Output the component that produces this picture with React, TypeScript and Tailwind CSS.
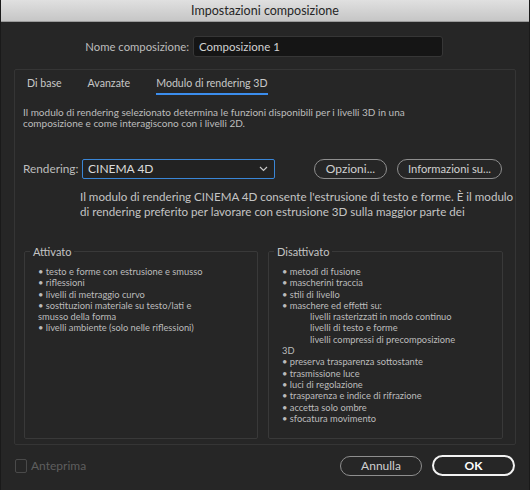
import React from 'react';

const enabledItems = [
  'testo e forme con estrusione e smusso',
  'riflessioni',
  'livelli di metraggio curvo',
];

const disabledTop = [
  'metodi di fusione',
  'mascherini traccia',
  'stili di livello',
  'maschere ed effetti su:',
];

const disabledIndented = [
  'livelli rasterizzati in modo continuo',
  'livelli di testo e forme',
  'livelli compressi di precomposizione',
];

const disabled3D = [
  'preserva trasparenza sottostante',
  'trasmissione luce',
  'luci di regolazione',
  'trasparenza e indice di rifrazione',
  'accetta solo ombre',
  'sfocatura movimento',
];

const Bullet: React.FC<{ children: React.ReactNode }> = ({ children }) => (
  <div className="whitespace-nowrap">• {children}</div>
);

const App: React.FC = () => {
  return (
    <div className="w-[530px] h-[490px] bg-[#262626] flex flex-col border-x border-[#1a1a1a] font-['Lato',sans-serif] text-[#bdbdbd] overflow-hidden">
      {/* Title bar */}
      <div className="h-[22px] shrink-0 bg-gradient-to-b from-[#e0e0e0] to-[#c6c6c6] border-b border-[#9a9a9a] flex items-center justify-center text-[12.5px] leading-[16px] text-[#262626]">
        Impostazioni composizione
      </div>

      {/* Name row */}
      <div className="flex items-center mt-[14px] h-[21px]">
        <div className="w-[188px] text-right text-[11.3px] leading-[16px] text-[#bdbdbd]">Nome composizione:</div>
        <div className="ml-[4px] w-[250px] h-[21px] bg-[#151515] border border-[#363636] rounded-[3px] flex items-center pl-[5px] text-[11.5px] leading-[16px] text-[#d2d2d2]">
          Composizione 1
        </div>
      </div>

      {/* Tab panel */}
      <div className="mt-[12px] ml-[13px] w-[502px] h-[376px] border border-[#353535] rounded-[2px] flex flex-col">
        <div className="flex items-end h-[25px] pl-[12px] text-[10.6px] leading-[14px] text-[#c8c8c8]">
          <div className="pb-[5px]">Di base</div>
          <div className="ml-[26px] pb-[5px]">Avanzate</div>
          <div className="ml-[26px] pb-[3px] border-b-2 border-[#3b8ded]">Modulo di rendering 3D</div>
        </div>

        <div className="mt-[12px] ml-[8px] text-[10px] leading-[11px] text-[#bdbdbd]">
          Il modulo di rendering selezionato determina le funzioni disponibili per i livelli 3D in una
          <br />
          composizione e come interagiscono con i livelli 2D.
        </div>

        {/* Rendering row */}
        <div className="flex items-center mt-[30px] h-[20px]">
          <div className="ml-[8px] w-[59px] text-[11.8px] leading-[16px] text-[#bdbdbd]">Rendering:</div>
          <div className="w-[193px] h-[20px] border border-[#3a86d6] rounded-[2px] bg-[#222] flex items-center justify-between pl-[5px] pr-[6px] text-[12px] leading-[16px] text-[#dadada]">
            <span>CINEMA 4D</span>
            <svg width="9" height="6" viewBox="0 0 9 6" fill="none" stroke="#c8c8c8" strokeWidth="1.2">
              <path d="M1 1l3.5 3.5L8 1" />
            </svg>
          </div>
          <div className="ml-[39px] w-[73px] h-[20px] rounded-full border border-[#8e8e8e] flex items-center justify-center text-[12px] leading-[16px] text-[#d0d0d0]">
            Opzioni...
          </div>
          <div className="ml-[10px] w-[105px] h-[20px] rounded-full border border-[#8e8e8e] flex items-center justify-center text-[11.2px] leading-[16px] text-[#d0d0d0]">
            Informazioni su...
          </div>
        </div>

        <div className="mt-[10px] ml-[65px] text-[11.6px] leading-[15px] text-[#c4c4c4] whitespace-nowrap">
          Il modulo di rendering CINEMA 4D consente l'estrusione di testo e forme. È il modulo
          <br />
          di rendering preferito per lavorare con estrusione 3D sulla maggior parte dei
        </div>

        {/* Groups */}
        <div className="flex mt-[26px] ml-[9px] gap-[10px]">
          <fieldset className="w-[234px] h-[194px] border border-[#393939] rounded-[2px]">
            <legend className="ml-[5px] px-[3px] text-[11px] leading-[13px] text-[#c4c4c4]">Attivato</legend>
            <div className="mt-[8px] pl-[13px] text-[9.3px] leading-[11.3px] text-[#bcbcbc]">
              {enabledItems.map(t => (
                <Bullet key={t}>{t}</Bullet>
              ))}
              <div className="whitespace-nowrap">
                • sostituzioni materiale su testo/lati e
                <br />
                smusso della forma
              </div>
              <Bullet>livelli ambiente (solo nelle riflessioni)</Bullet>
            </div>
          </fieldset>
          <fieldset className="w-[235px] h-[194px] border border-[#393939] rounded-[2px]">
            <legend className="ml-[5px] px-[3px] text-[11px] leading-[13px] text-[#c4c4c4]">Disattivato</legend>
            <div className="mt-[8px] pl-[13px] text-[9.3px] leading-[11.3px] text-[#bcbcbc]">
              {disabledTop.map(t => (
                <Bullet key={t}>{t}</Bullet>
              ))}
              {disabledIndented.map(t => (
                <div key={t} className="pl-[28px] whitespace-nowrap">{t}</div>
              ))}
              <div>3D</div>
              {disabled3D.map(t => (
                <Bullet key={t}>{t}</Bullet>
              ))}
            </div>
          </fieldset>
        </div>
      </div>

      {/* Footer */}
      <div className="flex items-center mt-[10px] h-[21px]">
        <div className="ml-[14px] w-[12px] h-[14px] border border-[#4a4a4a] rounded-[2px]" />
        <div className="ml-[4px] text-[12px] leading-[16px] text-[#5e5e5e]">Anteprima</div>
        <div className="ml-auto w-[82px] h-[20px] rounded-full border border-[#8e8e8e] flex items-center justify-center text-[12px] leading-[16px] text-[#d0d0d0]">
          Annulla
        </div>
        <div className="ml-[10px] mr-[14px] w-[83px] h-[21px] rounded-full border-2 border-[#f2f2f2] flex items-center justify-center text-[12px] leading-[16px] font-bold text-white">
          OK
        </div>
      </div>
    </div>
  );
};

export default App;
